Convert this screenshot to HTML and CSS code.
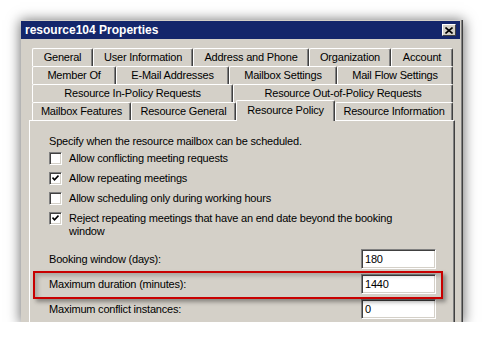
FILE: index.html
```html
<!DOCTYPE html>
<html lang="en">
<head>
    <meta charset="UTF-8">
    <title>resource104 Properties</title>
    <link rel="stylesheet" href="styles.css">
</head>
<body>
    <div class="window">
        <div class="titlebar">
            <span class="title">resource104 Properties</span>
            <span class="close-btn">
                <svg width="8" height="7" viewBox="0 0 8 7"><path d="M0.5 0.5 L7.5 6.5 M7.5 0.5 L0.5 6.5" stroke="#000" stroke-width="1.6"/></svg>
            </span>
        </div>

        <div class="dialog">
            <div class="tabs">
                <div class="tab-row row-1">
                    <div class="tab">General</div>
                    <div class="tab">User Information</div>
                    <div class="tab">Address and Phone</div>
                    <div class="tab">Organization</div>
                    <div class="tab">Account</div>
                </div>
                <div class="tab-row row-2">
                    <div class="tab">Member Of</div>
                    <div class="tab">E-Mail Addresses</div>
                    <div class="tab">Mailbox Settings</div>
                    <div class="tab">Mail Flow Settings</div>
                </div>
                <div class="tab-row row-3">
                    <div class="tab">Resource In-Policy Requests</div>
                    <div class="tab">Resource Out-of-Policy Requests</div>
                </div>
                <div class="tab-row row-4">
                    <div class="tab">Mailbox Features</div>
                    <div class="tab">Resource General</div>
                    <div class="tab active">Resource Policy</div>
                    <div class="tab">Resource Information</div>
                </div>
            </div>

            <div class="panel">
                <p class="intro">Specify when the resource mailbox can be scheduled.</p>

                <div class="checks">
                    <div class="check">
                        <span class="box"></span>
                        <span class="label">Allow conflicting meeting requests</span>
                    </div>
                    <div class="check">
                        <span class="box checked"><svg width="7" height="7" viewBox="0 0 7 7"><path d="M0.5 2.5 L2.5 4.8 L6.5 0.6" fill="none" stroke="#000" stroke-width="1.6"/></svg></span>
                        <span class="label">Allow repeating meetings</span>
                    </div>
                    <div class="check">
                        <span class="box"></span>
                        <span class="label">Allow scheduling only during working hours</span>
                    </div>
                    <div class="check">
                        <span class="box checked"><svg width="7" height="7" viewBox="0 0 7 7"><path d="M0.5 2.5 L2.5 4.8 L6.5 0.6" fill="none" stroke="#000" stroke-width="1.6"/></svg></span>
                        <span class="label">Reject repeating meetings that have an end date beyond the booking window</span>
                    </div>
                </div>

                <div class="fields">
                    <div class="field">
                        <span>Booking window (days):</span>
                        <span class="textbox">180</span>
                    </div>
                    <div class="field marked">
                        <span>Maximum duration (minutes):</span>
                        <span class="textbox">1440</span>
                    </div>
                    <div class="field">
                        <span>Maximum conflict instances:</span>
                        <span class="textbox">0</span>
                    </div>
                </div>
            </div>
        </div>
    </div>
</body>
</html>
```

FILE: styles.css
```css
body {
    margin: 0;
    background: #fff;
    font-family: "Liberation Sans", Arial, sans-serif;
    font-size: 11px;
    letter-spacing: -0.2px;
    color: #000;
}
.window {
    box-sizing: border-box;
    width: 442px;
    height: 302px;
    margin: 20px 0 0 21px;
    padding-top: 1px;
    background: #d4d0c8;
    border-right: 1px solid #404040;
    box-shadow: 0 1px 12px 1px rgba(0,0,0,0.55), inset -1px 0 #808080;
    overflow: hidden;
}
.titlebar {
    display: flex;
    justify-content: space-between;
    align-items: center;
    height: 18px;
    margin-right: 2px;
    padding-left: 4px;
    background: #14266b;
    color: #fff;
}
.title {
    font-weight: bold;
    font-size: 12px;
    letter-spacing: 0;
}
.close-btn {
    box-sizing: border-box;
    display: flex;
    align-items: center;
    justify-content: center;
    width: 14px;
    height: 12px;
    margin-right: 4px;
    background: #d4d0c8;
    border-top: 1px solid #fff;
    border-left: 1px solid #fff;
    border-right: 1px solid #404040;
    border-bottom: 1px solid #404040;
}
.dialog {
    padding: 9px 7px 0 8px;
}
.tabs {
    margin: 0 2px 0 3px;
}
.tab-row {
    display: grid;
    height: 18px;
}
.row-1 { grid-template-columns: 61px 100px 116px 82px 62px; }
.row-2 { grid-template-columns: 84px 113px 108px 116px; }
.row-3 { grid-template-columns: 201px 220px; }
.row-4 { grid-template-columns: 99px 105px 99px 118px; }
.tab {
    box-sizing: border-box;
    background: #d4d0c8;
    border-top: 1px solid #fff;
    border-left: 1px solid #fff;
    border-right: 1px solid #404040;
    border-radius: 2px 2px 0 0;
    box-shadow: inset -1px 0 #808080;
    text-align: center;
    line-height: 17px;
    white-space: nowrap;
}
.tab.active {
    position: relative;
    z-index: 1;
    margin: -2px 0 -1px 0;
    line-height: 18px;
}
.panel {
    height: 220px;
    padding: 14px 18px 0 19px;
    border-top: 1px solid #fff;
    border-left: 1px solid #fff;
    border-right: 1px solid #404040;
    box-shadow: inset -1px 0 #808080;
}
.intro {
    margin: 0;
    line-height: 13px;
}
.checks {
    margin-top: 1px;
}
.check {
    display: flex;
    gap: 7px;
    padding: 3px 0 4px;
    line-height: 13px;
}
.label {
    max-width: 340px;
}
.box {
    box-sizing: border-box;
    flex: none;
    display: flex;
    align-items: center;
    justify-content: center;
    width: 13px;
    height: 13px;
    background: #fff;
    border-top: 1px solid #808080;
    border-left: 1px solid #808080;
    border-right: 1px solid #fff;
    border-bottom: 1px solid #fff;
    box-shadow: inset 1px 1px #404040, inset -1px -1px #d4d0c8;
}
.fields {
    display: flex;
    flex-direction: column;
    gap: 5px;
    margin-top: 7px;
}
.field {
    display: flex;
    justify-content: space-between;
    align-items: center;
    height: 20px;
}
.textbox {
    box-sizing: border-box;
    width: 75px;
    height: 20px;
    padding-left: 3px;
    line-height: 18px;
    background: #fff;
    border-top: 1px solid #808080;
    border-left: 1px solid #808080;
    border-right: 1px solid #fff;
    border-bottom: 1px solid #fff;
    box-shadow: inset 1px 1px #404040, inset -1px -1px #d4d0c8;
}
.marked {
    position: relative;
}
.marked::after {
    content: "";
    position: absolute;
    left: -16px;
    right: -7px;
    top: -3px;
    bottom: -5px;
    border: 2px solid #c80000;
    box-shadow: 3px 3px 4px rgba(0,0,0,0.35), inset 3px 3px 4px rgba(0,0,0,0.2);
}
```
